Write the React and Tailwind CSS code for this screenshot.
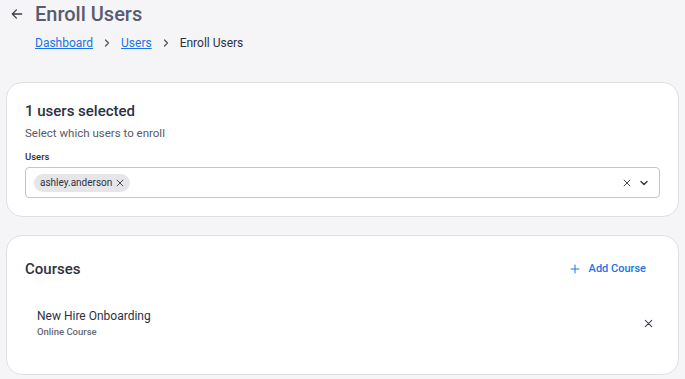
import React from "react";

const XIcon = ({ size = 12, stroke = 2, className = "" }) => (
  <svg width={size} height={size} viewBox="0 0 24 24" fill="none" stroke="currentColor" strokeWidth={stroke} strokeLinecap="round" className={className}>
    <path d="M5 5L19 19M19 5L5 19" />
  </svg>
);

export default function App() {
  return (
    <div className="min-h-[379px] w-[685px] bg-[#f5f5f7] font-['Roboto',sans-serif] text-[#2d3142]">
      <div className="flex items-center h-[28px]">
        <div className="w-[35px] flex justify-center pr-[2px] text-[#3a3d4d]">
          <svg width="14" height="14" viewBox="0 0 24 24" fill="none" stroke="currentColor" strokeWidth="2.2" strokeLinecap="round" strokeLinejoin="round">
            <path d="M20 12H4M11 5l-7 7 7 7" />
          </svg>
        </div>
        <h1 className="text-[20px] leading-[28px] font-medium text-[#585b70]">Enroll Users</h1>
      </div>
      <div className="flex items-center pl-[35px] mt-[6px] h-[18px] text-[12px] leading-[18px]">
        <a className="text-[#1a73e8] underline">Dashboard</a>
        <svg className="mx-[8px] text-[#555]" width="12" height="12" viewBox="0 0 24 24" fill="none" stroke="currentColor" strokeWidth="2.5" strokeLinecap="round" strokeLinejoin="round"><path d="M9 6l6 6-6 6" /></svg>
        <a className="text-[#1a73e8] underline">Users</a>
        <svg className="mx-[8px] text-[#555]" width="12" height="12" viewBox="0 0 24 24" fill="none" stroke="currentColor" strokeWidth="2.5" strokeLinecap="round" strokeLinejoin="round"><path d="M9 6l6 6-6 6" /></svg>
        <span className="text-[#2d3142]">Enroll Users</span>
      </div>

      <div className="mx-[6px] mt-[30px] bg-white border border-[#e0e0e3] rounded-[16px] px-[18px] pt-[17px] pb-[18px]">
        <div className="text-[15px] leading-[22px] font-medium text-[#2d3142]">1 users selected</div>
        <div className="text-[11.5px] leading-[16px] text-[#55596a] mt-[3px]">Select which users to enroll</div>
        <div className="text-[9.5px] leading-[12px] font-medium text-[#2d3142] mt-[10px]">Users</div>
        <div className="mt-[4px] h-[31px] border border-[#c4c5cc] rounded-[4px] flex items-center pl-[8px] pr-[9px]">
          <div className="flex items-center h-[18px] bg-[#e6e6e9] rounded-full pl-[6px] pr-[5px] text-[10px] text-[#2d3142]">
            <span>ashley.anderson</span>
            <XIcon size={10} stroke={2.2} className="ml-[3px] text-[#3a3d4d]" />
          </div>
          <div className="flex-1" />
          <XIcon size={10} stroke={2.2} className="text-[#3a3d4d]" />
          <svg className="ml-[6px] text-[#3a3d4d]" width="12" height="12" viewBox="0 0 24 24" fill="none" stroke="currentColor" strokeWidth="3" strokeLinecap="round" strokeLinejoin="round"><path d="M6 9l6 6 6-6" /></svg>
        </div>
      </div>

      <div className="mx-[6px] mt-[18px] bg-white border border-[#e0e0e3] rounded-[16px] px-[18px] pt-[22px] pb-[35px]">
        <div className="flex items-center h-[22px]">
          <div className="text-[15px] leading-[22px] font-medium text-[#2d3142]">Courses</div>
          <div className="flex-1" />
          <div className="flex items-center text-[#1a73e8] text-[11px] font-medium mr-[14px]">
            <svg width="12" height="12" viewBox="0 0 24 24" fill="none" stroke="currentColor" strokeWidth="2" strokeLinecap="round"><path d="M12 4v16M4 12h16" /></svg>
            <span className="ml-[8px]">Add Course</span>
          </div>
        </div>
        <div className="flex items-center mt-[27px] pl-[12px] pr-[6px]">
          <div>
            <div className="text-[12px] leading-[18px] text-[#2d3142]">New Hire Onboarding</div>
            <div className="text-[9.5px] leading-[14px] text-[#666a78] font-medium">Online Course</div>
          </div>
          <div className="flex-1" />
          <XIcon size={11} stroke={2.2} className="text-[#3a3d4d]" />
        </div>
      </div>
    </div>
  );
}
